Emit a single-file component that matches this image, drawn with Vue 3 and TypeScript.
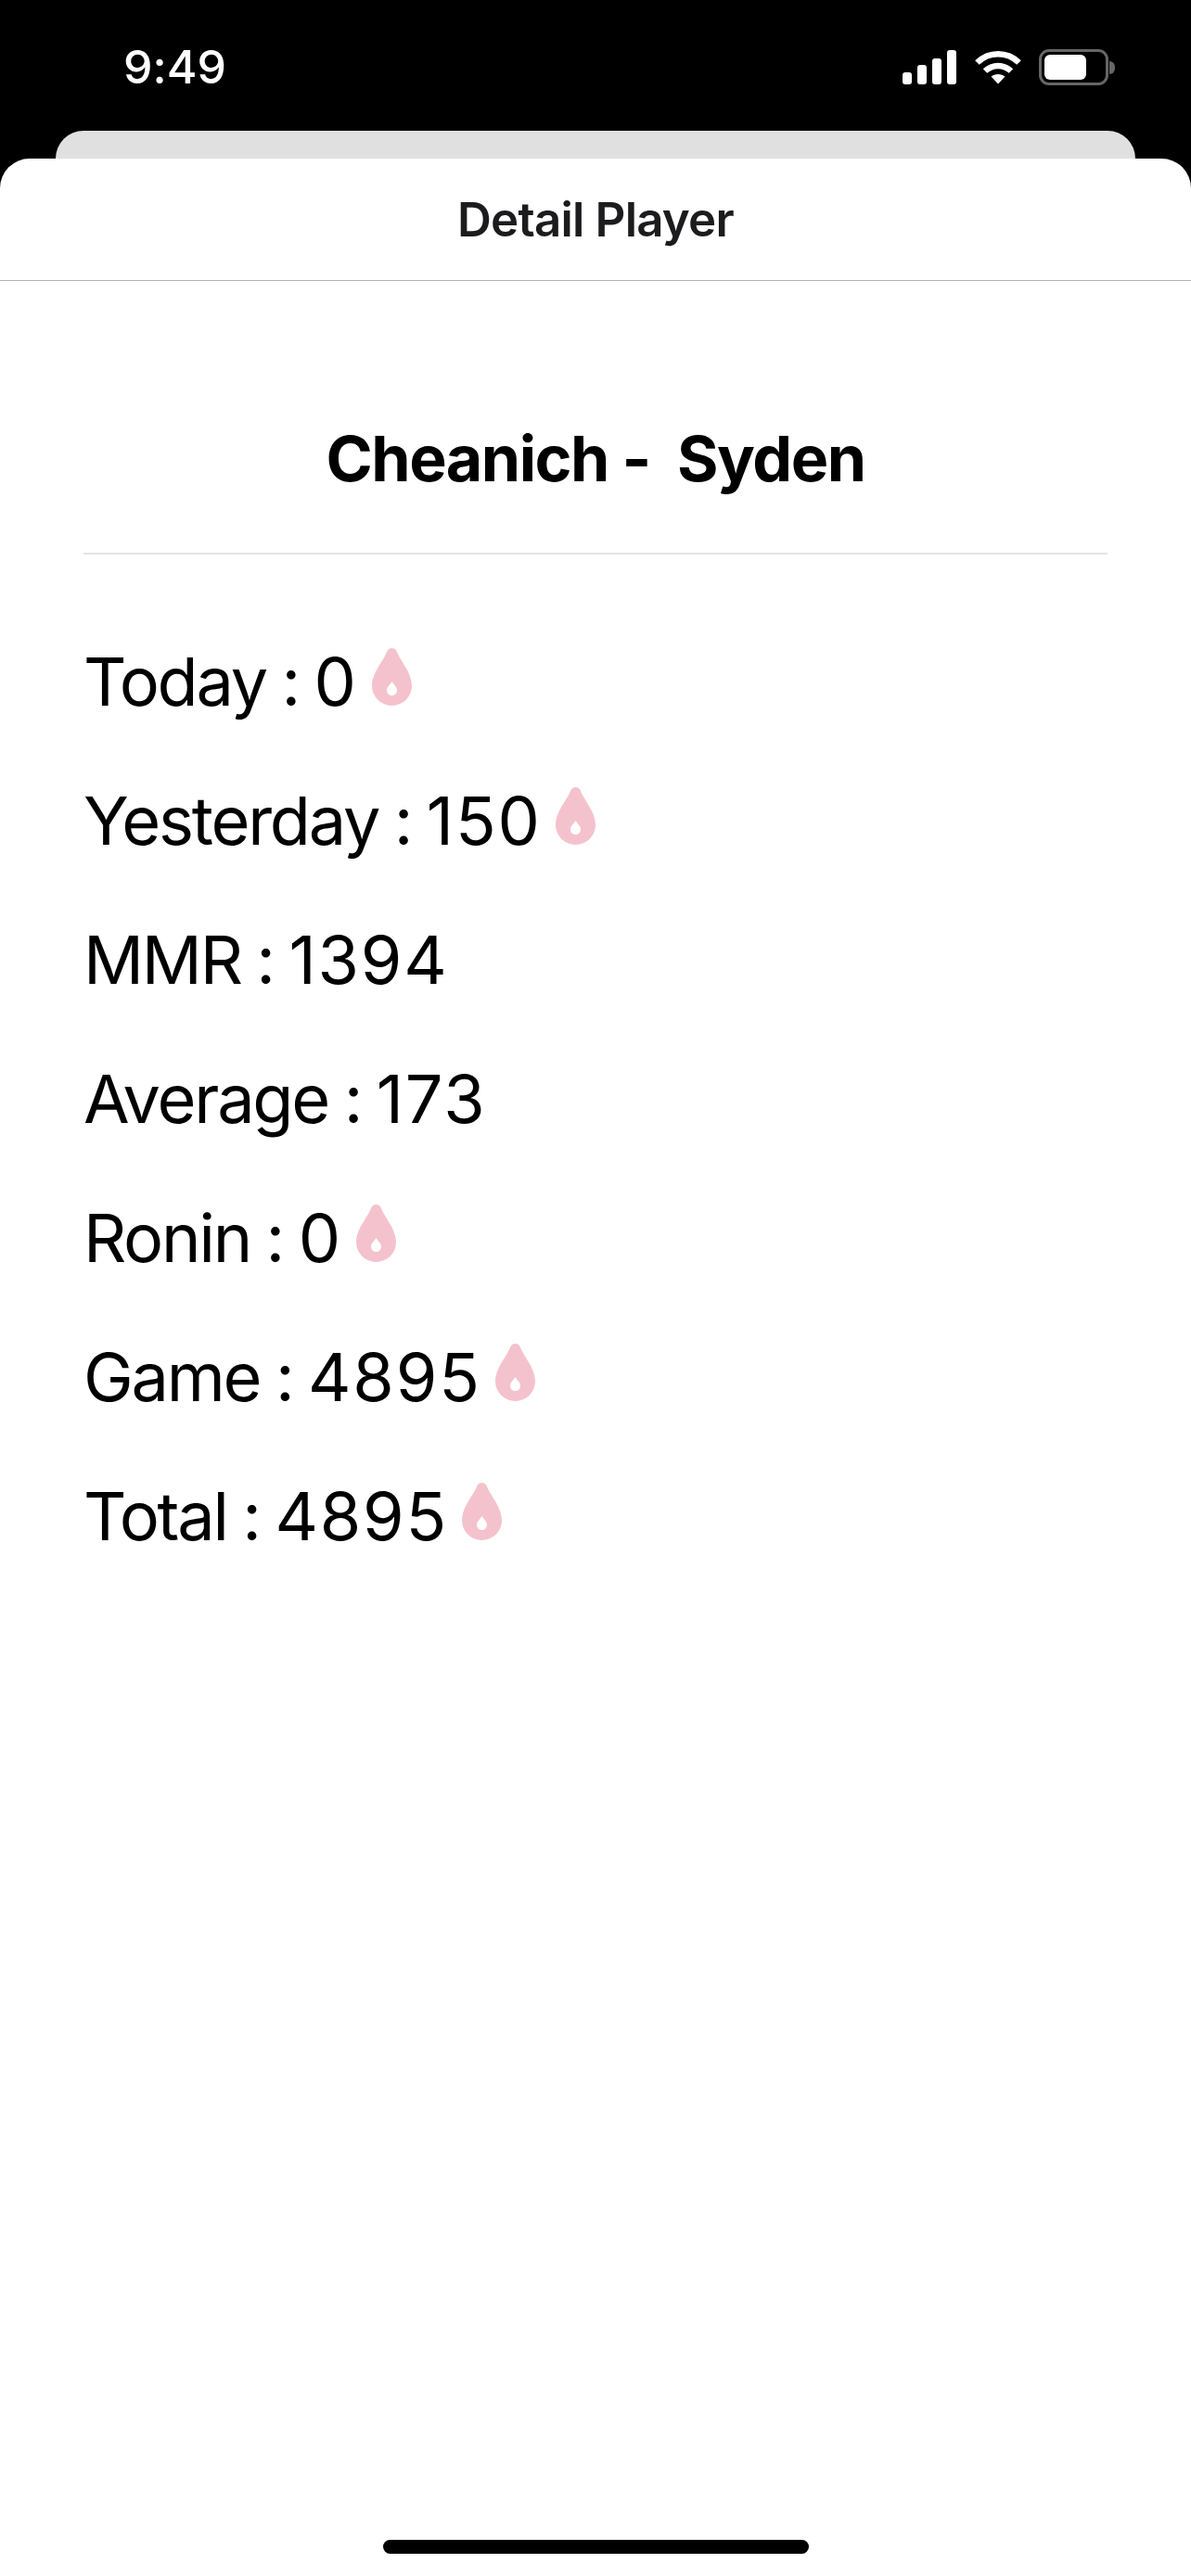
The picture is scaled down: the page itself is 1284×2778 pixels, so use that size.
<script setup lang="ts">
type StatRow = {
  label: string;
  value: string;
  drop: boolean;
};

const rows: StatRow[] = [
  { label: "Today", value: "0", drop: true },
  { label: "Yesterday", value: "150", drop: true },
  { label: "MMR", value: "1394", drop: false },
  { label: "Average", value: "173", drop: false },
  { label: "Ronin", value: "0", drop: true },
  { label: "Game", value: "4895", drop: true },
  { label: "Total", value: "4895", drop: true },
];
</script>

<template>
  <div class="phone">
    <header class="status-bar">
      <span class="time">9:49</span>
      <div class="status-icons">
        <svg class="signal" width="58" height="37" viewBox="0 0 58 37" fill="#fff">
          <rect x="0" y="24" width="10" height="13" rx="3" />
          <rect x="16" y="16" width="10" height="21" rx="3" />
          <rect x="32" y="9" width="10" height="28" rx="3" />
          <rect x="48" y="0" width="10" height="37" rx="3" />
        </svg>
        <svg class="wifi" width="50" height="37" viewBox="0 0 50 37" fill="none" stroke="#fff" stroke-width="6.5">
          <path d="M2.5 13.5C15 1 35 1 47.5 13.5" />
          <path d="M11 22.5C19 15 31 15 39 22.5" />
          <path d="M25 36.5L17.5 28.5C21.5 25 28.5 25 32.5 28.5Z" fill="#fff" stroke="none" />
        </svg>
        <div class="battery">
          <div class="battery-body"><div class="battery-fill"></div></div>
          <div class="battery-nub"></div>
        </div>
      </div>
    </header>

    <div class="peek-card"></div>

    <main class="sheet">
      <div class="nav-bar">Detail Player</div>

      <section class="content">
        <h1 class="player-name">Cheanich -&nbsp; Syden</h1>
        <div class="rule"></div>

        <div class="stats">
          <div v-for="row in rows" :key="row.label" class="stat-row">
            <span>{{ row.label }} : <span class="stat-value">{{ row.value }}</span></span>
            <svg v-if="row.drop" class="drop" width="43" height="62" viewBox="0 0 43 62">
              <path
                fill="#f4c2cd"
                fill-rule="evenodd"
                d="M21.5 0C24 0 26 1.5 27 4C30 13 43 26 43 40.5A21.5 21.5 0 0 1 0 40.5C0 26 13 13 16 4C17 1.5 19 0 21.5 0ZM21.5 36C20 39 16 41.5 16 45.5A5.5 5.5 0 0 0 27 45.5C27 41.5 23 39 21.5 36Z"
              />
            </svg>
          </div>
        </div>
      </section>

      <div class="home-indicator"></div>
    </main>
  </div>
</template>

<style scoped>
.phone {
  width: 1284px;
  height: 2778px;
  background: #000;
  display: flex;
  flex-direction: column;
  font-family: Inter, "Liberation Sans", sans-serif;
  font-feature-settings: "calt" 0;
  overflow: hidden;
}

.status-bar {
  height: 141px;
  box-sizing: border-box;
  display: flex;
  justify-content: space-between;
  padding: 53px 82px 0 133px;
}

.time {
  color: #fff;
  font-size: 50px;
  font-weight: 500;
  line-height: 39px;
}

.status-icons {
  display: flex;
  align-items: flex-start;
}

.signal {
  margin-top: 1px;
}

.wifi {
  margin-top: 1px;
  margin-left: 20px;
}

.battery {
  display: flex;
  align-items: center;
  margin-left: 19px;
}

.battery-body {
  width: 75px;
  height: 39px;
  box-sizing: border-box;
  border: 3px solid #666;
  border-radius: 11px;
  padding: 3px;
}

.battery-fill {
  width: 45px;
  height: 27px;
  background: #fff;
  border-radius: 6px;
}

.battery-nub {
  width: 6px;
  height: 14px;
  margin-left: 1px;
  background: #666;
  border-radius: 0 7px 7px 0;
}

.peek-card {
  height: 30px;
  margin: 0 60px;
  background: #e0e0e0;
  border-radius: 30px 30px 0 0;
}

.sheet {
  flex: 1;
  background: #fff;
  border-radius: 32px 32px 0 0;
  display: flex;
  flex-direction: column;
}

.nav-bar {
  height: 132px;
  box-sizing: border-box;
  border-bottom: 1.5px solid #b5b5b5;
  display: flex;
  align-items: center;
  justify-content: center;
  color: #1c1c1e;
  font-size: 51px;
  font-weight: 600;
  letter-spacing: -0.8px;
}

.content {
  flex: 1;
  padding: 143px 90px 0;
}

.player-name {
  margin: 0;
  text-align: center;
  color: #000;
  font-size: 68px;
  font-weight: 700;
  line-height: 96px;
  letter-spacing: -1.5px;
}

.rule {
  height: 1.5px;
  margin-top: 54px;
  background: #e4e4e4;
}

.stats {
  display: flex;
  flex-direction: column;
  gap: 63px;
  margin-top: 93px;
}

.stat-row {
  display: flex;
  align-items: baseline;
  gap: 15px;
  color: #000;
  font-size: 72px;
  line-height: 87px;
  height: 87px;
  letter-spacing: -2.2px;
  word-spacing: -1.5px;
}

.stat-value {
  letter-spacing: 1.8px;
}

.home-indicator {
  width: 459px;
  height: 15px;
  margin: 0 auto 24px;
  background: #000;
  border-radius: 8px;
}
</style>

<style>
html,
body {
  margin: 0;
  background: #000;
}
</style>
